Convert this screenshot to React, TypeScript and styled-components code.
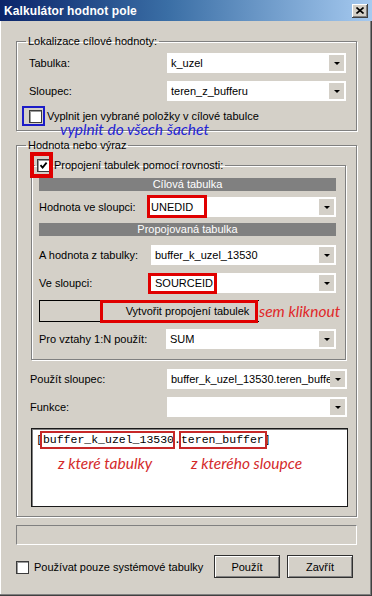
import React from 'react'
import styled, { createGlobalStyle } from 'styled-components'

const GlobalStyle = createGlobalStyle`
  html, body {
    margin: 0;
    padding: 0;
    background: #d4d0c8;
  }
  body {
    font-family: 'Liberation Sans', Arial, sans-serif;
    font-size: 11px;
    color: #000;
  }
`

const Window = styled.div`
  position: relative;
  width: 372px;
  height: 596px;
  box-sizing: border-box;
  background: #d4d0c8;
  box-shadow: inset -1px -1px #404040, inset -2px -2px #808080,
    inset 1px 0 #fff;
  overflow: hidden;
`

const TitleBar = styled.div`
  height: 21px;
  display: flex;
  align-items: center;
  justify-content: space-between;
  padding: 0 4px 0 4px;
  background: linear-gradient(90deg, #0a246a 0%, #3a6ea5 45%, #a6caf0 100%);
`

const Title = styled.span`
  color: #fff;
  font-weight: bold;
  font-size: 12px;
  letter-spacing: 0.1px;
`

const CloseButton = styled.span`
  width: 16px;
  height: 14px;
  box-sizing: border-box;
  background: #d4d0c8;
  box-shadow: inset -1px -1px #404040, inset 1px 1px #fff,
    inset -2px -2px #808080;
  display: flex;
  align-items: center;
  justify-content: center;
`

const Body = styled.div`
  padding: 14px 15px 0 16px;
  display: flex;
  flex-direction: column;
`

const Group = styled.fieldset<{ $pad: string; $mt?: number; $mx?: number }>`
  margin: ${p => p.$mt ?? 0}px ${p => p.$mx ?? 0}px 0 ${p => p.$mx ?? 0}px;
  padding: ${p => p.$pad};
  border: 1px solid #808080;
  box-shadow: inset 1px 1px #fff, 1px 1px #fff;
  min-width: 0;
  display: flex;
  flex-direction: column;
`

const Legend = styled.legend<{ $shift: number }>`
  padding: 0 2px;
  margin-left: ${p => p.$shift}px;
  line-height: 13px;
  height: 13px;
  display: flex;
  align-items: center;
  gap: 4px;
`

const FieldRow = styled.div<{ $mt?: number }>`
  display: flex;
  align-items: center;
  justify-content: space-between;
  height: 20px;
  margin-top: ${p => p.$mt ?? 0}px;
`

const ComboBox = styled.div<{ $w: number }>`
  width: ${p => p.$w}px;
  height: 20px;
  box-sizing: border-box;
  padding: 2px;
  background: #fff;
  display: flex;
  align-items: center;
`

const ComboText = styled.span`
  flex: 1;
  padding-left: 2px;
  white-space: nowrap;
  overflow: hidden;
`

const DropButton = styled.span`
  width: 15px;
  height: 16px;
  flex: none;
  background: #d4d0c8;
  display: flex;
  align-items: center;
  justify-content: center;

  &::after {
    content: '';
    border-left: 3px solid transparent;
    border-right: 3px solid transparent;
    border-top: 3px solid #000;
    margin-top: 1px;
  }
`

const CheckRow = styled.label<{ $mt?: number }>`
  display: flex;
  align-items: center;
  gap: 5px;
  height: 14px;
  margin-top: ${p => p.$mt ?? 0}px;
`

const Box = styled.span`
  width: 13px;
  height: 13px;
  box-sizing: border-box;
  flex: none;
  background: #fff;
  border: 1px solid #3c3c3c;
  box-shadow: inset 1px 1px #9a9a9a;
  display: flex;
  align-items: center;
  justify-content: center;
`

const SectionHeader = styled.div<{ $mt?: number }>`
  height: 13px;
  line-height: 13px;
  background: #808080;
  color: #fff;
  text-align: center;
  margin-top: ${p => p.$mt ?? 0}px;
`

const WideButton = styled.div`
  height: 22px;
  margin-top: 7px;
  box-sizing: border-box;
  border: 1px solid #000;
  background: #d4d0c8;
  display: flex;
  align-items: center;
  justify-content: center;
`

const ExpressionBox = styled.div`
  height: 79px;
  margin: 11px -1px 0 1px;
  box-sizing: border-box;
  background: #fff;
  border: 1px solid #1a1a1a;
  box-shadow: inset 1px 1px #808080;
  padding: 4px 0 0 4px;
  font-family: 'Liberation Mono', 'Courier New', monospace;
  font-size: 11.5px;
  white-space: pre;
`

const StatusBox = styled.div`
  height: 20px;
  margin-top: 8px;
  box-sizing: border-box;
  border-top: 1px solid #808080;
  border-left: 1px solid #808080;
  border-bottom: 1px solid #fff;
  border-right: 1px solid #fff;
`

const Footer = styled.div`
  display: flex;
  align-items: center;
  margin-top: 10px;
  margin-right: 4px;
  gap: 7px;
`

const FooterCheck = styled(CheckRow)`
  flex: 1;
  padding-top: 1px;
`

const Button = styled.button`
  width: 66px;
  height: 23px;
  padding: 0;
  font: inherit;
  color: #000;
  background: #d4d0c8;
  border: 1px solid #303030;
  box-shadow: inset 1px 1px #fff, inset -1px -1px #808080;
`

const Mark = styled.div<{ $x: number; $y: number; $w: number; $h: number; $c: string; $t: number }>`
  position: absolute;
  left: ${p => p.$x}px;
  top: ${p => p.$y}px;
  width: ${p => p.$w}px;
  height: ${p => p.$h}px;
  box-sizing: border-box;
  border: ${p => p.$t}px solid ${p => p.$c};
  pointer-events: none;
`

const Note = styled.div<{ $x: number; $y: number; $c: string; $bg?: boolean }>`
  position: absolute;
  left: ${p => p.$x}px;
  top: ${p => p.$y}px;
  color: ${p => p.$c};
  background: ${p => (p.$bg ? '#d4d0c8' : 'transparent')};
  padding: ${p => (p.$bg ? '4px 4px 4px 0' : '0')};
  font-family: Lato, 'Open Sans', sans-serif;
  font-style: italic;
  font-size: 15.5px;
  line-height: 18px;
  white-space: nowrap;
`

const Tick = () => (
  <svg width="9" height="9" viewBox="0 0 9 9">
    <path d="M1.5 4.2 L3.6 6.5 L7.6 1.6" fill="none" stroke="#000" strokeWidth="1.8" />
  </svg>
)

const Combo = ({ w, value }: { w: number; value?: string }) => (
  <ComboBox $w={w}>
    <ComboText>{value}</ComboText>
    <DropButton />
  </ComboBox>
)

export default function App() {
  return (
    <>
      <GlobalStyle />
      <Window>
        <TitleBar>
          <Title>Kalkulátor hodnot pole</Title>
          <CloseButton>
            <svg width="8" height="7" viewBox="0 0 8 7">
              <path d="M0.5 0.5 L7.5 6.5 M7.5 0.5 L0.5 6.5" stroke="#000" strokeWidth="1.6" />
            </svg>
          </CloseButton>
        </TitleBar>

        <Body>
          <Group $pad="5px 10px 7px 12px">
            <Legend $shift={-3}>Lokalizace cílové hodnoty:</Legend>
            <FieldRow>
              <span>Tabulka:</span>
              <Combo w={179} value="k_uzel" />
            </FieldRow>
            <FieldRow $mt={8}>
              <span>Sloupec:</span>
              <Combo w={179} value="teren_z_bufferu" />
            </FieldRow>
            <CheckRow $mt={8}>
              <Box />
              <span>Vyplnit jen vybrané položky v cílové tabulce</span>
            </CheckRow>
          </Group>

          <Group $pad="7px 9px 9px 13px" $mt={8}>
            <Legend $shift={-4}>Hodnota nebo výraz</Legend>
            <Group $pad="6px 9px 10px 7px" $mx={1}>
              <Legend $shift={-4}>
                <Box>
                  <Tick />
                </Box>
                <span>Propojení tabulek pomocí rovnosti:</span>
              </Legend>
              <SectionHeader>Cílová tabulka</SectionHeader>
              <FieldRow $mt={6}>
                <span>Hodnota ve sloupci:</span>
                <Combo w={189} value="UNEDID" />
              </FieldRow>
              <SectionHeader $mt={6}>Propojovaná tabulka</SectionHeader>
              <FieldRow $mt={9}>
                <span>A hodnota z tabulky:</span>
                <Combo w={185} value="buffer_k_uzel_13530" />
              </FieldRow>
              <FieldRow $mt={8}>
                <span>Ve sloupci:</span>
                <Combo w={185} value="SOURCEID" />
              </FieldRow>
              <WideButton>Vytvořit propojení tabulek</WideButton>
              <FieldRow $mt={7}>
                <span>Pro vztahy 1:N použít:</span>
                <Combo w={170} value="SUM" />
              </FieldRow>
            </Group>
            <FieldRow $mt={9}>
              <span>Použít sloupec:</span>
              <Combo w={180} value="buffer_k_uzel_13530.teren_buffer" />
            </FieldRow>
            <FieldRow $mt={8}>
              <span>Funkce:</span>
              <Combo w={180} />
            </FieldRow>
            <ExpressionBox>[buffer_k_uzel_13530.teren_buffer]</ExpressionBox>
          </Group>

          <StatusBox />

          <Footer>
            <FooterCheck>
              <Box />
              <span>Používat pouze systémové tabulky</span>
            </FooterCheck>
            <Button>Použít</Button>
            <Button>Zavřít</Button>
          </Footer>
        </Body>

        <Mark $x={22} $y={106} $w={23} $h={20} $c="#1c1cc8" $t={2} />
        <Note $x={60} $y={120} $c="#2424d6">vyplnit do všech šachet</Note>

        <Mark $x={30} $y={152} $w={23} $h={26} $c="#e00000" $t={4} />
        <Mark $x={147} $y={195} $w={60} $h={23} $c="#e00000" $t={3} />
        <Mark $x={148} $y={273} $w={69} $h={21} $c="#e00000" $t={3} />
        <Mark $x={100} $y={300} $w={158} $h={23} $c="#e00000" $t={3} />
        <Note $x={259} $y={298} $c="#e02828" $bg>
          sem kliknout
        </Note>

        <Mark $x={40} $y={431} $w={135} $h={18} $c="#c62828" $t={2} />
        <Mark $x={179} $y={431} $w={88} $h={18} $c="#c62828" $t={2} />
        <Note $x={58} $y={454} $c="#d42a2a">z které tabulky</Note>
        <Note $x={191} $y={454} $c="#d42a2a">z kterého sloupce</Note>
      </Window>
    </>
  )
}
